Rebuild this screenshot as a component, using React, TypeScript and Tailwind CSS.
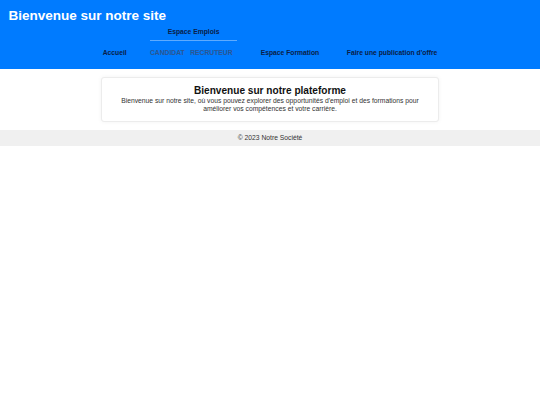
import React from 'react';

const navLink = "whitespace-nowrap";

const App = () => {
  return (
    <div className="min-h-[405px] bg-white font-['Liberation_Sans',Arial,sans-serif] text-[#333]">
      <header className="bg-[#007bff] px-[8.4px] pt-[8.4px] pb-[11.8px]">
        <h1 className="text-[13.5px] leading-[15.5px] font-bold text-white">Bienvenue sur notre site</h1>
        <nav className="mt-[4.1px]">
          <ul className="flex items-end justify-center text-[6.75px] leading-[7.76px] font-bold text-[#0a1d48]">
            <li className={navLink}>Accueil</li>
            {/* dropdown kept open, sub links in a row */}
            <li className="ml-[23.3px] flex w-[87.3px] flex-col">
              <span className="border-b border-[#5eabff] pb-[4.5px] text-center">Espace Emplois</span>
              <div className="mt-[8.1px] flex gap-[5.5px] text-[#2c5690]">
                <span>CANDIDAT</span>
                <span>RECRUTEUR</span>
              </div>
            </li>
            <li className={`ml-[23.4px] ${navLink}`}>Espace Formation</li>
            <li className={`ml-[27.7px] ${navLink}`}>Faire une publication d'offre</li>
          </ul>
        </nav>
      </header>

      <main className="mx-auto my-[8px] max-w-[337.5px]">
        <section className="rounded-[3px] border border-[#ececec] bg-white p-[8.4px] text-center shadow-[0_0_4px_rgba(0,0,0,0.05)]">
          <h2 className="text-[10.1px] leading-[10.6px] font-bold text-[#111]">Bienvenue sur notre plateforme</h2>
          <p className="text-[6.75px] leading-[7.76px] text-[#333]">
            Bienvenue sur notre site, où vous pouvez explorer des opportunités d'emploi et des formations pour
            améliorer vos compétences et votre carrière.
          </p>
        </section>
      </main>

      <footer className="bg-[#f0f0f0] py-[4.2px] text-center text-[6.75px] leading-[7.76px] text-[#333]">
        © 2023 Notre Société
      </footer>
    </div>
  );
};

export default App;
